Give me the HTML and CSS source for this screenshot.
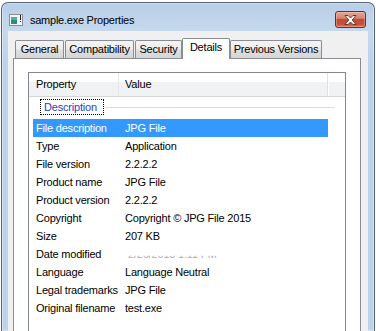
FILE: index.html
```html
<!DOCTYPE html>
<html>
  <head>
    <title>sample.exe Properties</title>
    <link rel="stylesheet" href="styles.css">
  </head>
  <body>
    <div class="window">
      <div class="titlebar">
        <svg class="app-icon" width="14" height="12" viewBox="0 0 14 12">
          <rect x="0.5" y="0.5" width="13" height="11" fill="#f4f4f4" stroke="#8a8f96" />
          <rect x="2" y="3" width="6" height="7" fill="#2f8f7a" />
          <rect x="2" y="3" width="6" height="3" fill="#4fb09a" />
          <rect x="11" y="1" width="1" height="5" fill="#222" />
          <rect x="11" y="7" width="1" height="1" fill="#222" />
        </svg>
        <span class="title">sample.exe Properties</span>
        <div class="close-btn">
          <svg width="13" height="10" viewBox="0 0 13 10">
            <polygon points="1,0.5 4,0.5 6.5,3 9,0.5 12,0.5 8.2,5 12,9.5 9,9.5 6.5,7 4,9.5 1,9.5 4.8,5"
              fill="#fff" stroke="#5b2b22" stroke-width="0.9" />
          </svg>
        </div>
      </div>
      <div class="client">
        <div class="tabs">
          <div class="tab tab-general">General</div>
          <div class="tab tab-compat">Compatibility</div>
          <div class="tab tab-security">Security</div>
          <div class="tab tab-details selected">Details</div>
          <div class="tab tab-previous">Previous Versions</div>
        </div>
        <div class="panel">
          <div class="listview">
            <div class="lv-header">
              <div class="col col-prop">Property</div>
              <div class="col col-val">Value</div>
              <div class="col col-rest"></div>
            </div>
            <div class="group">
              <span class="group-label">Description</span>
              <span class="group-line"></span>
            </div>
            <div class="row selected"><span class="prop">File description</span><span class="val">JPG File</span></div>
            <div class="row"><span class="prop">Type</span><span class="val">Application</span></div>
            <div class="row"><span class="prop">File version</span><span class="val">2.2.2.2</span></div>
            <div class="row"><span class="prop">Product name</span><span class="val">JPG File</span></div>
            <div class="row"><span class="prop">Product version</span><span class="val">2.2.2.2</span></div>
            <div class="row"><span class="prop">Copyright</span><span class="val">Copyright © JPG File 2015</span></div>
            <div class="row"><span class="prop">Size</span><span class="val">207 KB</span></div>
            <div class="row"><span class="prop">Date modified</span><span class="val"><span class="smudge">2/26/2015 1:11 PM</span></span></div>
            <div class="row"><span class="prop">Language</span><span class="val">Language Neutral</span></div>
            <div class="row"><span class="prop">Legal trademarks</span><span class="val">JPG File</span></div>
            <div class="row"><span class="prop">Original filename</span><span class="val">test.exe</span></div>
          </div>
        </div>
      </div>
    </div>
  </body>
</html>
```
FILE: styles.css
```css
html,
body {
  height: 331px;
}

body {
  margin: 0;
  background: #fff;
  overflow: hidden;
  font-family: "Liberation Sans", Arial, sans-serif;
  font-size: 11px;
  letter-spacing: -0.2px;
  color: #000;
}

.window {
  margin: 2px 0 0 1px;
  width: 374px;
  height: 329px;
  box-sizing: border-box;
  border: 1px solid #56657a;
  border-bottom: none;
  border-radius: 7px 7px 0 0;
  background: linear-gradient(#b8cde6, #c6d9ee 28px, #bdd3ea 60px, #bdd3ea);
  box-shadow: inset 0 0 0 1px rgba(255, 255, 255, 0.35);
  overflow: hidden;
}

.titlebar {
  height: 28px;
  box-sizing: border-box;
  padding: 5px 8px 0 7px;
  display: flex;
  align-items: center;
}

.app-icon {
  display: block;
}

.title {
  margin-left: 7px;
  letter-spacing: -0.25px;
}

.close-btn {
  margin-left: auto;
  width: 31px;
  height: 17px;
  box-sizing: border-box;
  border: 1px solid #6b2c22;
  border-radius: 3px;
  background: linear-gradient(#e4a999 0%, #d6826f 42%, #c34b33 50%, #c45036 80%, #d27a5f 100%);
  box-shadow: inset 0 0 0 1px rgba(255, 220, 210, 0.35);
  display: flex;
  align-items: center;
  justify-content: center;
}

.close-btn svg {
  display: block;
}

.client {
  margin: 0 6px;
  height: 300px;
  box-sizing: border-box;
  padding: 7px 0 0 5px;
  background: #f0f0f0;
}

.tabs {
  position: relative;
  z-index: 1;
  display: flex;
  align-items: flex-end;
  height: 20px;
  padding-left: 2px;
}

.tab {
  height: 18px;
  box-sizing: border-box;
  border: 1px solid #898c95;
  border-bottom: none;
  border-radius: 2px 2px 0 0;
  background: linear-gradient(#f4f4f4, #ececec 45%, #dedede 55%, #d6d6d6);
  line-height: 16px;
  text-align: center;
  white-space: nowrap;
}

.tab-general {
  width: 49px;
}

.tab-compat {
  width: 69px;
  margin-left: 1px;
}

.tab-security {
  width: 47px;
  margin-left: 1px;
}

.tab-details {
  width: 48px;
}

.tab-previous {
  width: 92px;
}

.tab.selected {
  height: 21px;
  margin-bottom: -1px;
  background: #fff;
  line-height: 17px;
}

.panel {
  width: 348px;
  height: 273px;
  box-sizing: border-box;
  border: 1px solid #898c95;
  border-bottom: none;
  background: #fff;
  padding: 13px 14px 0 14px;
}

.listview {
  height: 260px;
  box-sizing: border-box;
  border: 1px solid #828790;
  border-bottom: none;
  background: #fff;
}

.lv-header {
  display: flex;
  height: 23px;
  border-bottom: 1px solid #d5d5d5;
  background: linear-gradient(#fff 0, #fff 38%, #f1f2f4 40%, #f1f2f4 100%);
  line-height: 23px;
}

.col {
  box-sizing: border-box;
}

.col-prop {
  width: 90px;
  padding-left: 7px;
  border-right: 1px solid #e6e7ea;
}

.col-val {
  width: 209px;
  padding-left: 6px;
  border-right: 1px solid #e0e1e4;
  box-shadow: 1px 0 0 #fff;
}

.col-rest {
  flex: 1;
}

.group {
  display: flex;
  align-items: center;
  height: 16px;
  margin: 2px 10px 4px 11px;
}

.group-label {
  width: 64px;
  height: 16px;
  box-sizing: border-box;
  border: 1px dotted #000;
  padding-left: 3px;
  line-height: 14px;
  color: #2b3cc0;
}

.group-line {
  flex: 1;
  margin-left: 1px;
  height: 1px;
  background: #d6ddec;
}

.row {
  display: flex;
  width: 295px;
  height: 18px;
  margin-left: 4px;
  line-height: 18px;
  white-space: nowrap;
}

.row.selected {
  background: #3399ff;
  color: #fff;
}

.prop {
  width: 92px;
  box-sizing: border-box;
  padding-left: 3px;
}

.smudge {
  display: inline-block;
  margin-left: 3px;
  color: #b0b0b0;
  clip-path: inset(60% 0 22% 0);
}
```
